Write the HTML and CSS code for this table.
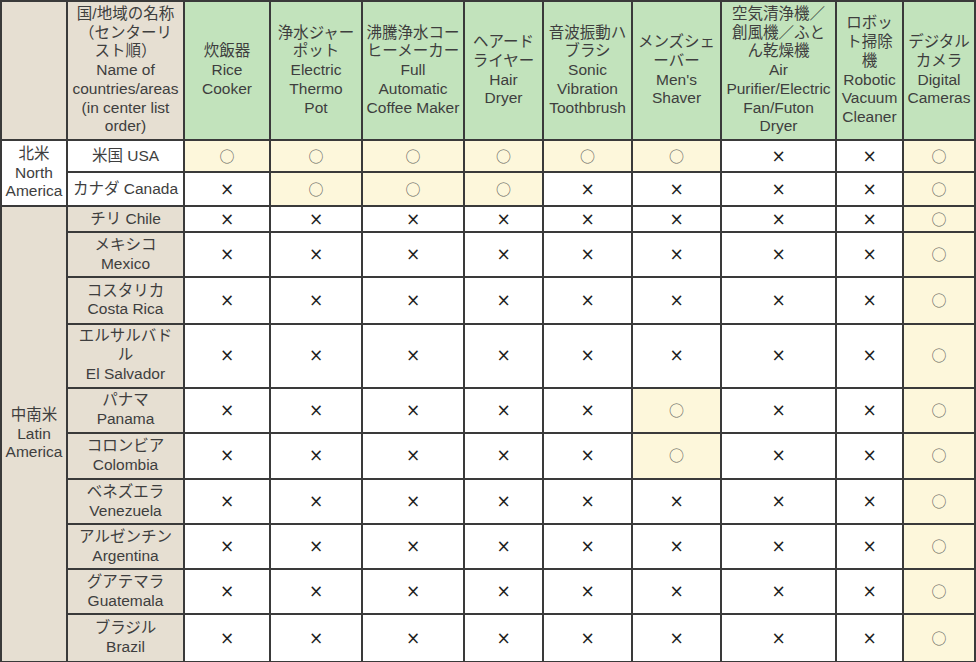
FILE: index.html
```html
<!DOCTYPE html>
<html lang="ja">
<head>
<meta charset="utf-8">
<title>Availability table</title>
<link rel="stylesheet" href="styles.css">
</head>
<body>
<table class="grid">
  <colgroup>
    <col class="c-region"><col class="c-country">
    <col class="c-rice"><col class="c-pot"><col class="c-coffee"><col class="c-hair">
    <col class="c-sonic"><col class="c-shaver"><col class="c-air"><col class="c-robot"><col class="c-cam">
  </colgroup>
  <thead>
    <tr class="r-head">
      <th class="beige"></th>
      <th class="beige">国/地域の名称<br>（センターリ<br>スト順）<br>Name of<br>countries/areas<br>(in center list<br>order)</th>
      <th class="green">炊飯器<br>Rice<br>Cooker</th>
      <th class="green">浄水ジャー<br>ポット<br>Electric<br>Thermo<br>Pot</th>
      <th class="green">沸騰浄水コー<br>ヒーメーカー<br>Full<br>Automatic<br>Coffee Maker</th>
      <th class="green">ヘアード<br>ライヤー<br>Hair<br>Dryer</th>
      <th class="green">音波振動ハ<br>ブラシ<br>Sonic<br>Vibration<br>Toothbrush</th>
      <th class="green">メンズシェ<br>ーバー<br>Men's<br>Shaver</th>
      <th class="green">空気清浄機／<br>創風機／ふと<br>ん乾燥機<br>Air<br>Purifier/Electric<br>Fan/Futon<br>Dryer</th>
      <th class="green">ロボッ<br>ト掃除<br>機<br>Robotic<br>Vacuum<br>Cleaner</th>
      <th class="green">デジタル<br>カメラ<br>Digital<br>Cameras</th>
    </tr>
  </thead>
  <tbody>
    <tr class="r-32">
      <td rowspan="2" class="region">北米<br>North<br>America</td>
      <td class="name">米国 USA</td>
      <td class="yes">○</td><td class="yes">○</td><td class="yes">○</td><td class="yes">○</td><td class="yes">○</td><td class="yes">○</td><td class="no">×</td><td class="no">×</td><td class="yes">○</td>
    </tr>
    <tr class="r-33">
      <td class="name">カナダ Canada</td>
      <td class="no">×</td><td class="yes">○</td><td class="yes">○</td><td class="yes">○</td><td class="no">×</td><td class="no">×</td><td class="no">×</td><td class="no">×</td><td class="yes">○</td>
    </tr>
    <tr class="r-27">
      <td rowspan="10" class="region beige">中南米<br>Latin<br>America</td>
      <td class="name beige">チリ Chile</td>
      <td class="no">×</td><td class="no">×</td><td class="no">×</td><td class="no">×</td><td class="no">×</td><td class="no">×</td><td class="no">×</td><td class="no">×</td><td class="yes">○</td>
    </tr>
    <tr class="r-45">
      <td class="name beige">メキシコ<br>Mexico</td>
      <td class="no">×</td><td class="no">×</td><td class="no">×</td><td class="no">×</td><td class="no">×</td><td class="no">×</td><td class="no">×</td><td class="no">×</td><td class="yes">○</td>
    </tr>
    <tr class="r-46">
      <td class="name beige">コスタリカ<br>Costa Rica</td>
      <td class="no">×</td><td class="no">×</td><td class="no">×</td><td class="no">×</td><td class="no">×</td><td class="no">×</td><td class="no">×</td><td class="no">×</td><td class="yes">○</td>
    </tr>
    <tr class="r-64">
      <td class="name beige">エルサルバド<br>ル<br>El Salvador</td>
      <td class="no">×</td><td class="no">×</td><td class="no">×</td><td class="no">×</td><td class="no">×</td><td class="no">×</td><td class="no">×</td><td class="no">×</td><td class="yes">○</td>
    </tr>
    <tr class="r-45">
      <td class="name beige">パナマ<br>Panama</td>
      <td class="no">×</td><td class="no">×</td><td class="no">×</td><td class="no">×</td><td class="no">×</td><td class="yes">○</td><td class="no">×</td><td class="no">×</td><td class="yes">○</td>
    </tr>
    <tr class="r-46">
      <td class="name beige">コロンビア<br>Colombia</td>
      <td class="no">×</td><td class="no">×</td><td class="no">×</td><td class="no">×</td><td class="no">×</td><td class="yes">○</td><td class="no">×</td><td class="no">×</td><td class="yes">○</td>
    </tr>
    <tr class="r-45">
      <td class="name beige">ベネズエラ<br>Venezuela</td>
      <td class="no">×</td><td class="no">×</td><td class="no">×</td><td class="no">×</td><td class="no">×</td><td class="no">×</td><td class="no">×</td><td class="no">×</td><td class="yes">○</td>
    </tr>
    <tr class="r-45">
      <td class="name beige">アルゼンチン<br>Argentina</td>
      <td class="no">×</td><td class="no">×</td><td class="no">×</td><td class="no">×</td><td class="no">×</td><td class="no">×</td><td class="no">×</td><td class="no">×</td><td class="yes">○</td>
    </tr>
    <tr class="r-45">
      <td class="name beige">グアテマラ<br>Guatemala</td>
      <td class="no">×</td><td class="no">×</td><td class="no">×</td><td class="no">×</td><td class="no">×</td><td class="no">×</td><td class="no">×</td><td class="no">×</td><td class="yes">○</td>
    </tr>
    <tr class="r-47">
      <td class="name beige">ブラジル<br>Brazil</td>
      <td class="no">×</td><td class="no">×</td><td class="no">×</td><td class="no">×</td><td class="no">×</td><td class="no">×</td><td class="no">×</td><td class="no">×</td><td class="yes">○</td>
    </tr>
  </tbody>
</table>
</body>
</html>
```
FILE: styles.css
```css
html, body {
  margin: 0;
  padding: 0;
  background: #ffffff;
}

.grid {
  border-collapse: collapse;
  table-layout: fixed;
  width: 976px;
  font-family: "Liberation Sans", "Noto Sans CJK JP", sans-serif;
  font-size: 15.5px;
  line-height: 18.7px;
  color: #3e3e3e;
}

.grid th,
.grid td {
  border: 2px solid #3a3a3a;
  padding: 0 1px;
  text-align: center;
  vertical-align: middle;
  font-weight: normal;
  white-space: nowrap;
  overflow: hidden;
}

.c-region { width: 66px; }
.c-country { width: 117px; }
.c-rice { width: 86px; }
.c-pot { width: 92px; }
.c-coffee { width: 102px; }
.c-hair { width: 79px; }
.c-sonic { width: 89px; }
.c-shaver { width: 89px; }
.c-air { width: 115px; }
.c-robot { width: 67px; }
.c-cam { width: 72px; }

.r-head th { height: 137px; }
.r-27 td { height: 24px; }
.r-32 td { height: 30px; }
.r-33 td { height: 32px; }
.r-45 td { height: 43px; }
.r-46 td { height: 44.5px; }
.r-47 td { height: 46px; }
.r-64 td { height: 62px; }

.beige { background: #e6dfd2; }
.green { background: #c2e3bc; }

.region { background: #ffffff; }
.region.beige { background: #e6dfd2; }
.name { background: #ffffff; }
.name.beige { background: #e6dfd2; }

.yes {
  background: #fdf7db;
  color: #66665e;
  font-family: "Noto Sans CJK JP", sans-serif;
  font-size: 15px;
}

.no {
  background: #ffffff;
  color: #1e1e1e;
  font-family: "DejaVu Sans", sans-serif;
  font-size: 17px;
  font-weight: bold;
}
```
